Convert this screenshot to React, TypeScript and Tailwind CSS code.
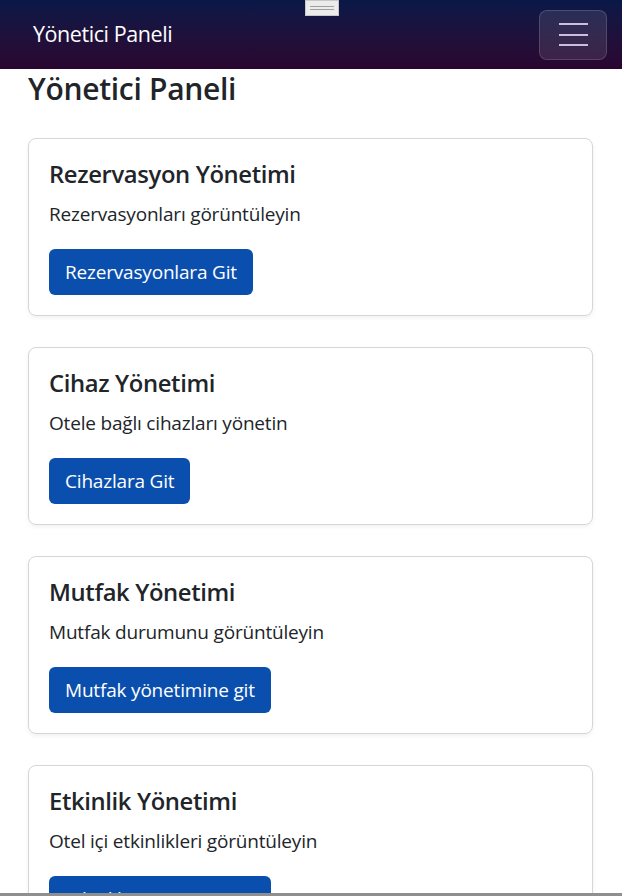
const cards = [
  { title: 'Rezervasyon Yönetimi', text: 'Rezervasyonları görüntüleyin', button: 'Rezervasyonlara Git' },
  { title: 'Cihaz Yönetimi', text: 'Otele bağlı cihazları yönetin', button: 'Cihazlara Git' },
  { title: 'Mutfak Yönetimi', text: 'Mutfak durumunu görüntüleyin', button: 'Mutfak yönetimine git' },
  { title: 'Etkinlik Yönetimi', text: 'Otel içi etkinlikleri görüntüleyin', button: 'Etkinlik yönetimine git' },
];

export default function App() {
  return (
    <div className="h-[896px] overflow-hidden bg-white border-b-[3px] border-[#8f8f8f] font-['Open_Sans',sans-serif] text-[#212529]">
      {/* Navbar */}
      <nav className="relative h-[69px] flex items-center justify-between pl-[33px] pr-[15px] bg-gradient-to-b from-[#081848] to-[#2a0630]">
        <span className="text-[21.5px] text-white tracking-[-0.02em]">Yönetici Paneli</span>
        <button className="w-[68px] h-[50px] rounded-[8px] bg-white/10 border border-white/15 flex flex-col items-center justify-center gap-[8.5px]">
          <span className="block w-[29px] h-[2px] bg-[#c9bde0]" />
          <span className="block w-[29px] h-[2px] bg-[#c9bde0]" />
          <span className="block w-[29px] h-[2px] bg-[#c9bde0]" />
        </button>
        {/* drag handle overlay */}
        <div className="absolute left-[305px] top-0 w-[34px] h-[16px] bg-[#ececec] border border-[#c8c8c8] flex flex-col items-center justify-center gap-[2px]">
          <span className="block w-[24px] h-[1px] bg-[#a0a0a0]" />
          <span className="block w-[24px] h-[1px] bg-[#a0a0a0]" />
        </div>
      </nav>

      <main className="pl-[28px] pr-[29px]">
        <h1 className="text-[30px] leading-[38px] pt-[1px] mb-[30px] font-semibold tracking-[-0.01em]">Yönetici Paneli</h1>

        <div className="flex flex-col gap-[31px]">
          {cards.map((c) => (
            <div key={c.title} className="border border-[#d6d6d6] rounded-[8px] shadow-[0_2px_4px_rgba(0,0,0,0.06)] p-[20px] flex flex-col items-start">
              <h5 className="text-[23.8px] leading-[30px] font-semibold mb-[10px] tracking-[-0.015em]">{c.title}</h5>
              <p className="text-[19px] leading-[30px] mb-[20px] tracking-[-0.01em]">{c.text}</p>
              <button className="h-[46px] px-[16px] rounded-[6px] bg-[#0b4fae] text-white text-[19px] tracking-[-0.01em]">{c.button}</button>
            </div>
          ))}
        </div>
      </main>
    </div>
  );
}
